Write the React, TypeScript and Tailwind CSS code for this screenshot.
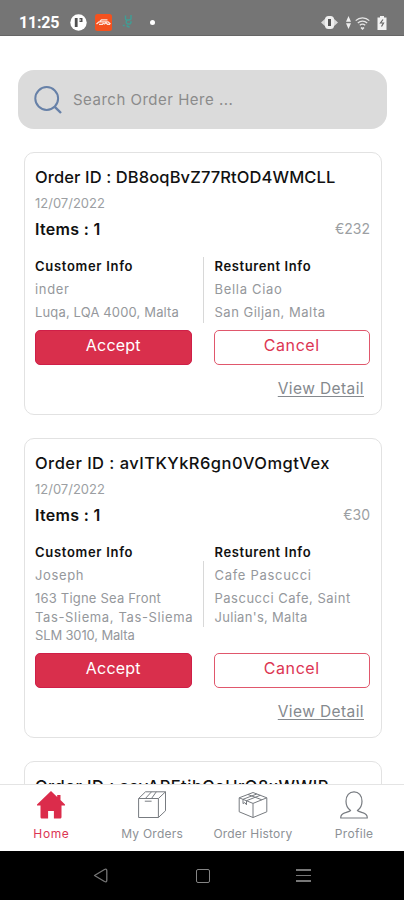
import React from "react";
import clsx from "clsx";

interface Line {
  text: string;
  spacing: string;
}

interface Order {
  id: string;
  idClass: string;
  date: string;
  items: number;
  price: string;
  customer: Line[];
  restaurant: Line[];
}

// First line of each party is the name, the rest is the address
const orders: Order[] = [
  {
    id: "DB8oqBvZ77RtOD4WMCLL",
    idClass: "tracking-[0.11px]",
    date: "12/07/2022",
    items: 1,
    price: "€232",
    customer: [
      { text: "inder", spacing: "tracking-[0.65px]" },
      { text: "Luqa, LQA 4000, Malta", spacing: "tracking-[0.15px]" },
    ],
    restaurant: [
      { text: "Bella Ciao", spacing: "tracking-[0.7px]" },
      { text: "San Giljan, Malta", spacing: "tracking-[0.5px]" },
    ],
  },
  {
    id: "avITKYkR6gn0VOmgtVex",
    idClass: "tracking-[0.46px]",
    date: "12/07/2022",
    items: 1,
    price: "€30",
    customer: [
      { text: "Joseph", spacing: "tracking-[0.65px]" },
      { text: "163 Tigne Sea Front", spacing: "tracking-[0.2px]" },
      { text: "Tas-Sliema, Tas-Sliema", spacing: "tracking-[0.63px]" },
      { text: "SLM 3010, Malta", spacing: "tracking-[-0.15px]" },
    ],
    restaurant: [
      { text: "Cafe Pascucci", spacing: "tracking-[0.7px]" },
      { text: "Pascucci Cafe, Saint", spacing: "tracking-[0.5px]" },
      { text: "Julian's, Malta", spacing: "tracking-[0.3px]" },
    ],
  },
  {
    id: "asvAPEtjhCoHrO8xWWIP",
    idClass: "tracking-[0.45px]",
    date: "12/07/2022",
    items: 1,
    price: "€45",
    customer: [
      { text: "Maria", spacing: "tracking-[0.3px]" },
      { text: "Sliema, Malta", spacing: "tracking-[0.3px]" },
    ],
    restaurant: [
      { text: "Bella Ciao", spacing: "tracking-[0.7px]" },
      { text: "San Giljan, Malta", spacing: "tracking-[0.5px]" },
    ],
  },
];

function StatusBar() {
  return (
    <div className="flex h-9 shrink-0 items-end justify-between border-b border-[#666] bg-[#757575] pb-[3px] pl-[19px] pr-[17px] text-white">
      <div className="flex h-[19px] items-center">
        <span className="w-[51px] font-[Roboto] text-[16px] font-bold leading-[19px] tracking-[-0.2px]">
          11:25
        </span>
        <svg className="h-[17px] w-[17px]" viewBox="0 0 17 17">
          <circle cx="8.5" cy="8.5" r="8.2" fill="#fff" />
          <path d="M6.2 4v9" stroke="#505050" strokeWidth="2.8" />
          <path d="M9.5 4h3v4h-3z" fill="#505050" />
          <path d="M9.5 5.3h1.200v1.400H9.500z" fill="#fff" />
        </svg>
        <svg className="ml-2 h-[17px] w-[17px]" viewBox="0 0 17 17">
          <rect width="17" height="17" rx="2.5" fill="#f4511e" />
          <path d="M1.5 10 4 7.8h9l2.5 2.2M5 7.2l1.5-1.4h6M4 10.3h3.5l1-1.5M9 10.3l2-1.5 1.5 1.5H15" stroke="#fff" strokeWidth="1.3" fill="none" opacity=".85" />
        </svg>
        <svg className="ml-[10px] h-[17px] w-[11px]" viewBox="0 0 11 17" fill="none" stroke="#429c94" strokeWidth="1.5">
          <path d="M3.5 1.5V5c0 1.500 5.500 1.500 5.500-.5V1M6 5.800c-2.400.7-2.400 3.700-.2 4.200s4-1.200 3-2.900M.8 11.500h2M4.500 11.800l3 1.400" />
        </svg>
        <span className="ml-[17px] h-[5px] w-[5px] rounded-full bg-white" />
      </div>
      <div className="flex h-[19px] items-center">
        <svg className="h-[15px] w-[17px]" viewBox="0 0 17 15">
          <path d="M0 7.5 5 3v9zM17 7.5 12 3v9z" fill="#d8d8d8" />
          <rect x="4" y="1" width="9" height="13" rx="3.5" fill="#eee" />
          <rect x="7" y="4" width="3" height="7" fill="#555" />
        </svg>
        <svg className="ml-[8px] h-[13px] w-[5px]" viewBox="0 0 5 13" fill="#eee">
          <path d="M2.5 0 5 5.7H0zM2.5 13 5 7.3H0z" />
        </svg>
        <svg className="ml-[4px] h-[14px] w-[15px]" viewBox="0 0 15 14" fill="none" stroke="#e6e6e6" strokeWidth="1.3">
          <path d="M.7 4.6C4.5 1 10.5 1 14.3 4.6M2.8 7c2.7-2.4 6.7-2.4 9.4 0M4.8 9.3c1.6-1.4 3.8-1.4 5.4 0" />
          <path d="m6 11.5 1.5 1.6L9 11.5" fill="#e6e6e6" />
        </svg>
        <svg className="ml-[7px] h-[14px] w-[10px]" viewBox="0 0 10 14">
          <path d="M3 0h4v1.5h2.5V14H.5V1.5H3z" fill="#f2f2f2" />
          <path d="M6 3.5 3.5 7h3L4.5 10.5" stroke="#666" strokeWidth="1.2" fill="none" />
        </svg>
      </div>
    </div>
  );
}

function SearchBox() {
  return (
    <div className="ml-[18px] mr-[17px] mt-[34px] flex h-[59px] items-center rounded-2xl bg-[#dbdbdb] pl-[16px]">
      <svg className="h-[28px] w-[28px]" viewBox="0 0 28 28" fill="none" stroke="#6781a8" strokeWidth="2">
        <circle cx="12.7" cy="12.5" r="11.4" />
        <path d="m20.8 20.8 6.2 6.2" strokeWidth="2.4" />
      </svg>
      <span className="ml-[11px] mt-[2px] text-[15px] tracking-[0.5px] text-[#8b8b8b]">Search Order Here ...</span>
    </div>
  );
}

function InfoColumn({ title, titleClass, lines }: { title: string; titleClass: string; lines: Line[] }) {
  const [name, ...address] = lines;

  return (
    <div className="self-start whitespace-nowrap text-[13px] text-[#95989c]">
      <h3 className={clsx("text-[13px] font-semibold leading-6 text-[#111]", titleClass)}>{title}</h3>
      <p className={clsx("mb-[3px] leading-[22px]", name.spacing)}>{name.text}</p>
      {address.map((line) => (
        <p key={line.text} className={clsx("leading-[18.5px]", line.spacing)}>
          {line.text}
        </p>
      ))}
    </div>
  );
}

function OrderCard({ order }: { order: Order }) {
  return (
    <div className="rounded-[10px] border border-[#e2e2e2] bg-white pb-[14px] pl-[10px] pr-[11px] pt-[11px]">
      <h2 className={clsx("whitespace-nowrap text-[16.5px] font-medium leading-[26px] text-[#111]", order.idClass)}>
        Order ID : {order.id}
      </h2>
      <p className="text-[13px] leading-[26px] text-[#9c9fa3]">{order.date}</p>
      <div className="flex h-[26px] items-center justify-between leading-[26px]">
        <span className="text-[16px] font-semibold tracking-[0.3px] text-[#111]">Items : {order.items}</span>
        <span className="text-[14px] text-[#9c9fa3]">{order.price}</span>
      </div>

      <div className="mt-3 grid grid-cols-[168px_1px_1fr] items-center">
        <InfoColumn title="Customer Info" titleClass="tracking-[0.7px]" lines={order.customer} />
        <div className="-mb-[2px] mt-[2px] h-[66px] bg-[#d8d8d8]" />
        <div className="self-start pl-[10.5px]">
          <InfoColumn title="Resturent Info" titleClass="tracking-[0.6px]" lines={order.restaurant} />
        </div>
      </div>

      <div className="mt-[8.5px] grid grid-cols-2 gap-[22px] text-[16px]">
        <button className="h-[35px] rounded-[5px] border border-[#cf1f48] bg-[#d92f4c] pb-[5px] leading-6 tracking-[0.2px] text-white">
          Accept
        </button>
        <button className="h-[35px] rounded-[5px] border border-[#e0576c] bg-white pb-[5px] leading-6 tracking-[0.6px] text-[#dc3553]">
          Cancel
        </button>
      </div>

      <div className="mt-[13px] flex h-[22px] justify-end pr-[6px] leading-[22px]">
        <a className="text-[15.5px] tracking-[0.4px] text-[#85898e] underline underline-offset-2">View Detail</a>
      </div>
    </div>
  );
}

function TabBar() {
  return (
    <div className="grid h-[67px] shrink-0 grid-cols-4 border-t border-[#e4e4e4] bg-white pl-px text-[12px] text-[#8d9196]">
      <div className="flex flex-col items-center pt-[6px] text-[#dc3553]">
        <svg className="h-[28px] w-[28px]" viewBox="0 0 28 28" fill="#db2c4b">
          <path d="M14 0 0 13.400v1.200h3.500V26c0 1 .7 1.600 1.700 1.600h5.900V20h5.800v7.600h5.900c1 0 1.700-.6 1.700-1.600V14.600H28v-1.200l-4.500-4.300V4h-3.300v2z" />
        </svg>
        <span className="mt-[6px] leading-[18px] tracking-[0.6px]">Home</span>
      </div>
      <div className="flex flex-col items-center pt-[6px]">
        <svg className="h-[28px] w-[28px]" viewBox="0 0 28 28" fill="none" stroke="#777b80" strokeWidth="1" strokeLinejoin="round">
          <path d="M.6 7.500h19.800v19H.6zM.6 7.500 7.500.8h20l-7.100 6.700M27.500.8v19l-7.100 6.700M7.400 7.500 13.500.8M13.500 7.500l4.800-6.700M6.800 10.200h6.800" />
        </svg>
        <span className="mt-[6px] leading-[18px] tracking-[0.25px]">My Orders</span>
      </div>
      <div className="flex flex-col items-center pt-[6px]">
        <svg className="h-[28px] w-[30px]" viewBox="0 0 30 28" fill="none" stroke="#777b80" strokeWidth="1" strokeLinejoin="round">
          <path d="M1.200 6.800 15 1.500l13.800 5.300L15 12.400zM1.200 6.800v14L15 26.500l13.800-5.700v-14M15 12.400v14.100M5 8.300 18.800 3M8.500 9.700 22.300 4.300M5 8.300v4.300l1.800-1 1.700 2.200V9.700M10 3.500l13.800 5.300" />
        </svg>
        <span className="mt-[6px] leading-[18px] tracking-[0.2px]">Order History</span>
      </div>
      <div className="flex flex-col items-center pl-px pt-[6px]">
        <svg className="h-[28px] w-[28px]" viewBox="0 0 28 28" fill="none" stroke="#777b80" strokeWidth="1.2" strokeLinejoin="round">
          <path d="M14 .8c-4.700 0-8 3.900-8 9.400 0 4.300 2 7.600 4.600 9.300-1 1-3 1.500-5.200 2.200C2.300 22.600.7 23.800.7 27h26.600c0-3.200-1.600-4.400-4.700-5.300-2.200-.7-4.200-1.200-5.200-2.200C20 17.800 22 14.500 22 10.200c0-5.500-3.300-9.400-8-9.400z" />
        </svg>
        <span className="mt-[6px] leading-[18px] tracking-[0.3px]">Profile</span>
      </div>
    </div>
  );
}

function SystemNav() {
  return (
    <div className="flex h-[49px] shrink-0 items-center justify-between bg-black px-[93px] text-[#777]">
      <svg className="h-4 w-4" viewBox="0 0 16 16" fill="none" stroke="currentColor" strokeWidth="1.3" strokeLinejoin="round">
        <path d="M1.5 7.5 11.5 1.5q2.300-.9 2.300 1.200v9.600q0 2.100-2.300 1.200z" />
      </svg>
      <span className="h-[14px] w-[14px] rounded-[2px] border border-[#858585]" />
      <div className="flex w-[15px] flex-col gap-[4px]">
        <span className="h-[1.5px] bg-[#777]" />
        <span className="h-[1.5px] bg-[#777]" />
        <span className="h-[1.5px] bg-[#777]" />
      </div>
    </div>
  );
}

export default function App() {
  return (
    <div className="flex h-[900px] w-[404px] flex-col overflow-hidden bg-white font-[Inter,sans-serif]">
      <StatusBar />
      <div className="min-h-0 flex-1 overflow-hidden">
        <SearchBox />
        <div className="ml-[24px] mr-[22px] mt-[23px] flex flex-col gap-[23px]">
          {orders.map((order) => (
            <OrderCard key={order.id} order={order} />
          ))}
        </div>
      </div>
      <TabBar />
      <SystemNav />
    </div>
  );
}
